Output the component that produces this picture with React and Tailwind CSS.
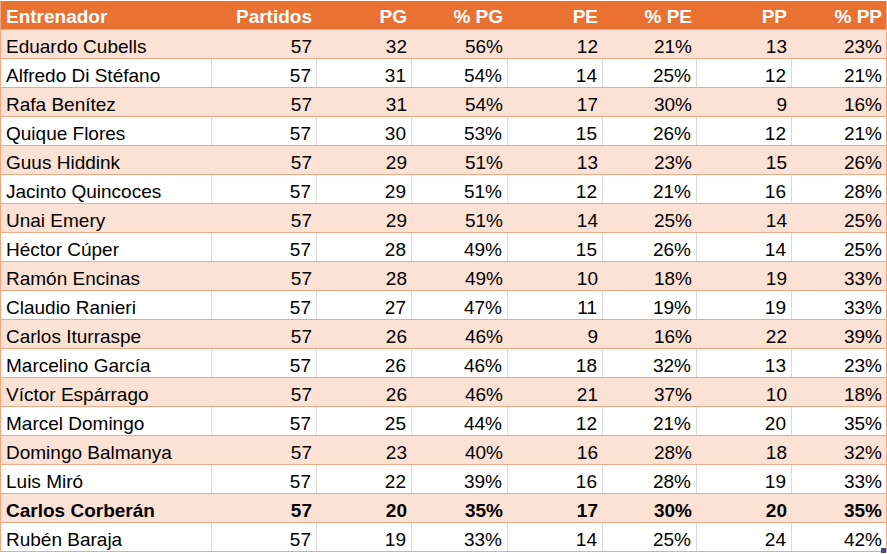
const rows = [
  ["Eduardo Cubells", 57, 32, "56%", 12, "21%", 13, "23%"],
  ["Alfredo Di Stéfano", 57, 31, "54%", 14, "25%", 12, "21%"],
  ["Rafa Benítez", 57, 31, "54%", 17, "30%", 9, "16%"],
  ["Quique Flores", 57, 30, "53%", 15, "26%", 12, "21%"],
  ["Guus Hiddink", 57, 29, "51%", 13, "23%", 15, "26%"],
  ["Jacinto Quincoces", 57, 29, "51%", 12, "21%", 16, "28%"],
  ["Unai Emery", 57, 29, "51%", 14, "25%", 14, "25%"],
  ["Héctor Cúper", 57, 28, "49%", 15, "26%", 14, "25%"],
  ["Ramón Encinas", 57, 28, "49%", 10, "18%", 19, "33%"],
  ["Claudio Ranieri", 57, 27, "47%", 11, "19%", 19, "33%"],
  ["Carlos Iturraspe", 57, 26, "46%", 9, "16%", 22, "39%"],
  ["Marcelino García", 57, 26, "46%", 18, "32%", 13, "23%"],
  ["Víctor Espárrago", 57, 26, "46%", 21, "37%", 10, "18%"],
  ["Marcel Domingo", 57, 25, "44%", 12, "21%", 20, "35%"],
  ["Domingo Balmanya", 57, 23, "40%", 16, "28%", 18, "32%"],
  ["Luis Miró", 57, 22, "39%", 16, "28%", 19, "33%"],
  ["Carlos Corberán", 57, 20, "35%", 17, "30%", 20, "35%"],
  ["Rubén Baraja", 57, 19, "33%", 14, "25%", 24, "42%"],
];

const headers = ["Entrenador", "Partidos", "PG", "% PG", "PE", "% PE", "PP", "% PP"];
const widths = ["w-[211px]", "w-[105px]", "w-[95px]", "w-[96px]", "w-[95px]", "w-[94px]", "w-[95px]", "w-[95px]"];

export default function App() {
  return (
    <div className="relative w-[887px] h-[554px] bg-white overflow-hidden pt-[1px]" style={{ fontFamily: '"Liberation Sans", Arial, sans-serif' }}>
      <div className="border-x border-[#F1A983]">
        <div className="flex h-[29px] bg-[#E97132] text-white font-bold text-[19px] leading-none border-b border-[#F1A983]">
          {headers.map((h, i) => (
            <div key={h} className={`${widths[i]} shrink-0 flex items-end pb-[3px] ${i === 0 ? "pl-[5px]" : "justify-end pr-[5px]"}`}>
              {h}
            </div>
          ))}
        </div>
        {rows.map((r, idx) => {
          const shaded = idx % 2 === 0;
          const bold = r[0] === "Carlos Corberán";
          return (
            <div
              key={r[0]}
              className={`flex h-[29px] border-b border-[#F1A983] text-[19px] leading-none text-black ${shaded ? "bg-[#FBE2D5]" : "bg-white"} ${bold ? "font-bold" : ""}`}
            >
              {r.map((c, i) => (
                <div
                  key={i}
                  className={`${widths[i]} shrink-0 flex items-end pb-[2px] ${i === 0 ? "pl-[5px]" : "justify-end pr-[5px]"} ${!shaded && i < 7 ? "border-r border-[#DADADA]" : ""}`}
                >
                  {c}
                </div>
              ))}
            </div>
          );
        })}
      </div>
      <div className="absolute right-[1px] top-[548px] w-[5px] h-[5px] bg-[#3B4C8C]" />
    </div>
  );
}
